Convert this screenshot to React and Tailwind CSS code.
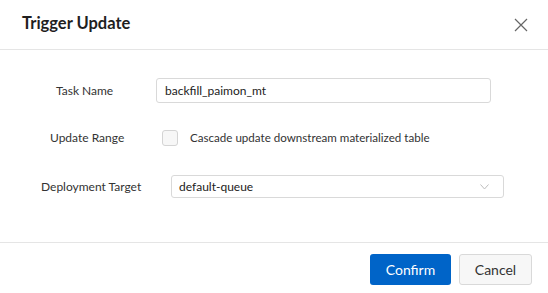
export default function App() {
  const font = { fontFamily: 'Lato, "Noto Sans", sans-serif' };
  return (
    <div className="w-[548px] h-[293px] bg-white flex flex-col text-[#333]" style={font}>
      <div className="h-[50px] border-b border-[#e5e5e5] flex items-center justify-between pl-[22px] pr-[20px] shrink-0">
        <div className="text-[16.5px] font-bold text-[#1f1f1f] leading-none pb-[2px]">Trigger Update</div>
        <svg width="14" height="14" viewBox="0 0 14 14" className="text-[#666]">
          <path d="M1 1 L13 13 M13 1 L1 13" stroke="currentColor" strokeWidth="1.2" fill="none" />
        </svg>
      </div>
      <div className="h-[193px] border-b border-[#e5e5e5] shrink-0 pt-[28px] flex flex-col text-[12px]">
        <div className="flex items-center h-[25px]">
          <div className="pl-[56px] w-[156px]">Task Name</div>
          <div className="w-[335px] h-[25px] border border-[#d9d9d9] rounded-[3px] flex items-center pl-[8px] text-[#222]">
            backfill_paimon_mt
          </div>
        </div>
        <div className="flex items-center h-[24px] mt-[23px]">
          <div className="pl-[50px] w-[162px]">Update Range</div>
          <div className="w-[16px] h-[16px] rounded-[3px] border border-[#d4d4d4] bg-[#f7f7f7]" />
          <div className="ml-[12px] text-[11.6px]">Cascade update downstream materialized table</div>
        </div>
        <div className="flex items-center h-[23px] mt-[25px]">
          <div className="pl-[41px] w-[171px]">Deployment Target</div>
          <div className="w-[333px] h-[23px] border border-[#d9d9d9] rounded-[3px] flex items-center justify-between pl-[7px] pr-[14px] text-[#222]">
            <span>default-queue</span>
            <svg width="9" height="6" viewBox="0 0 9 6">
              <path d="M0.5 0.5 L4.5 5 L8.5 0.5" stroke="#bdbdbd" strokeWidth="1" fill="none" />
            </svg>
          </div>
        </div>
      </div>
      <div className="flex justify-end gap-[8px] pt-[11px] pr-[16px]">
        <button className="w-[81px] h-[31px] rounded-[3px] bg-[#0064c8] text-white text-[14px]">Confirm</button>
        <button className="w-[73px] h-[31px] rounded-[3px] bg-[#f7f7f7] border border-[#d9d9d9] text-[#333] text-[14px]">Cancel</button>
      </div>
    </div>
  );
}
